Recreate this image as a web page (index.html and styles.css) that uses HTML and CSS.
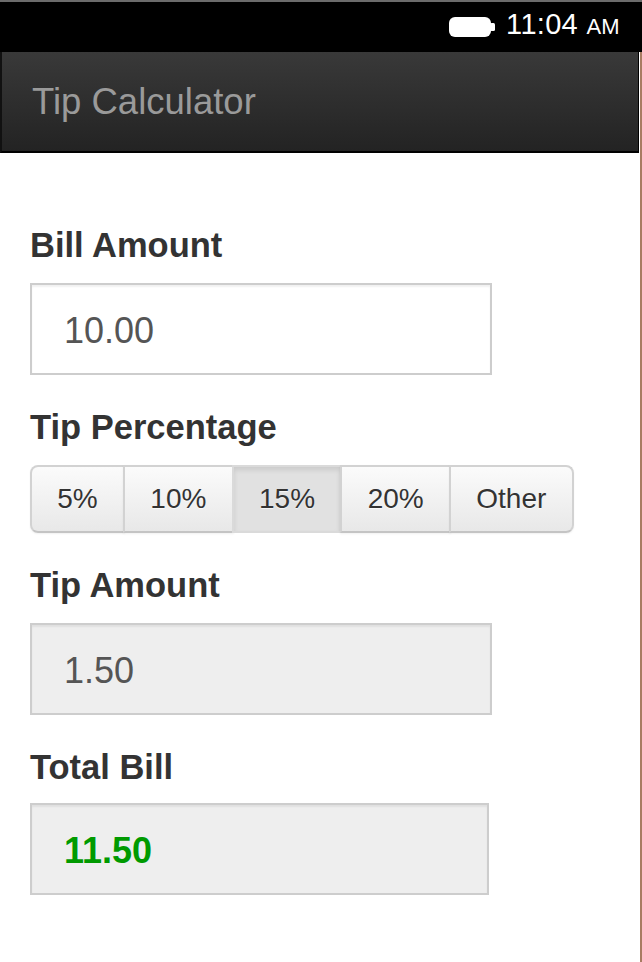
FILE: index.html
```html
<!DOCTYPE html>
<html lang="en">
<head>
<meta charset="utf-8">
<title>Tip Calculator</title>
<link rel="stylesheet" href="styles.css">
</head>
<body>
<div class="status">
  <svg class="battery" width="48" height="22" viewBox="0 0 48 22">
    <rect x="1" y="1" width="42" height="20" rx="6" fill="#fff"/>
    <rect x="42" y="7" width="5" height="8" rx="1.5" fill="#fff"/>
  </svg>
  <div class="clock">11:04 <span class="ampm">AM</span></div>
</div>
<div class="screen">
  <header class="appbar">
    <h1 class="title">Tip Calculator</h1>
  </header>
  <main class="content">
    <section class="field">
      <div class="label">Bill Amount</div>
      <div class="box box--input">10.00</div>
    </section>
    <section class="field">
      <div class="label">Tip Percentage</div>
      <div class="btn-group">
        <span class="btn">5%</span>
        <span class="btn">10%</span>
        <span class="btn btn--active">15%</span>
        <span class="btn">20%</span>
        <span class="btn">Other</span>
      </div>
    </section>
    <section class="field">
      <div class="label">Tip Amount</div>
      <div class="box box--readonly">1.50</div>
    </section>
    <section class="field field--total">
      <div class="label">Total Bill</div>
      <div class="box box--readonly box--total">11.50</div>
    </section>
  </main>
</div>
</body>
</html>
```
FILE: styles.css
```css
* { box-sizing: border-box; }
html, body {
  margin: 0;
  padding: 0;
  background: #fff;
  font-family: "Liberation Sans", Arial, Helvetica, sans-serif;
}
body { width: 642px; height: 962px; overflow: hidden; }

.status {
  height: 52px;
  border-top: 2px solid #6b6b6b;
  background: #000;
  display: flex;
  justify-content: flex-end;
  align-items: center;
  padding: 0 22px 4px 0;
  gap: 10px;
}
.battery { display: block; margin-top: 4px; }
.clock {
  color: #fff;
  font-size: 29px;
  line-height: 32px;
  letter-spacing: 0.3px;
}
.ampm { font-size: 22px; }

.screen {
  border-right: 2px solid #a87c62;
  height: 910px;
}
.appbar {
  height: 101px;
  margin-right: 1px;
  background: linear-gradient(#393939, #232323);
  border-left: 2px solid #111;
  border-right: 1px solid #000;
  border-bottom: 2px solid #000;
  display: flex;
  align-items: center;
  padding-left: 30px;
}
.title {
  margin: 0;
  font-size: 36.5px;
  font-weight: normal;
  color: #9a9a9a;
  line-height: 40px;
}

.content { padding: 72px 0 0 30px; }
.field { margin-bottom: 32px; }
.label {
  font-size: 34.5px;
  font-weight: bold;
  color: #333;
  line-height: 40px;
  margin-bottom: 18px;
}
.field--total .label { margin-bottom: 16px; }

.box {
  width: 462px;
  height: 92px;
  border: 2px solid #cdcdcd;
  display: flex;
  align-items: center;
  padding: 3px 0 0 32px;
  font-size: 36px;
  color: #555;
  box-shadow: inset 0 2px 2px rgba(0,0,0,0.06);
}
.box--input { background: #fff; }
.box--readonly { background: #eee; }
.box--total {
  width: 459px;
  color: #009a00;
  font-weight: bold;
}

.btn-group { display: flex; }
.btn {
  height: 68px;
  padding: 0 25.3px;
  display: flex;
  align-items: center;
  font-size: 28px;
  color: #333;
  text-shadow: 0 1px 1px rgba(255,255,255,0.75);
  background: linear-gradient(#fbfbfb, #e8e8e8);
  border: 2px solid #d2d2d2;
  border-bottom-color: #c4c4c4;
  box-shadow: 0 1px 2px rgba(0,0,0,0.06);
}
.btn + .btn { margin-left: -2px; }
.btn:first-child { border-radius: 8px 0 0 8px; }
.btn:last-child { border-radius: 0 8px 8px 0; }
.btn--active {
  background: #e1e1e1;
  box-shadow: inset 0 3px 5px rgba(0,0,0,0.10);
  border-color: #dadada;
}
```
